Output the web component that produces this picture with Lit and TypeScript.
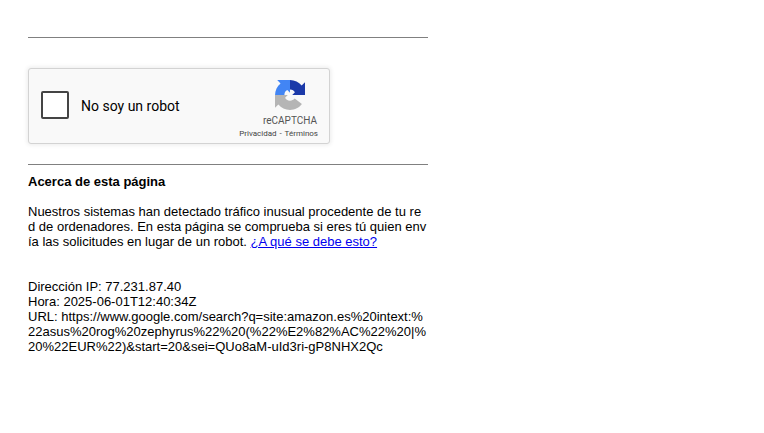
import { LitElement, html, css } from "lit";
import { customElement } from "lit/decorators.js";

@customElement("captcha-box")
class CaptchaBox extends LitElement {
  static styles = css`
    :host {
      display: flex;
      box-sizing: border-box;
      width: 302px;
      height: 76px;
      border: 1px solid #d3d3d3;
      border-radius: 3px;
      background: #f9f9f9;
      box-shadow: 0 0 4px 1px rgba(0, 0, 0, 0.08);
      color: #000;
      font-family: Roboto, "Liberation Sans", sans-serif;
    }
    .check {
      display: flex;
      align-items: center;
      flex: 1;
      gap: 12px;
      padding-left: 12px;
      font-size: 14px;
      line-height: 17px;
    }
    .box {
      box-sizing: border-box;
      width: 28px;
      height: 28px;
      margin-bottom: 2px;
      border: 2px solid #444;
      border-radius: 2px;
      background: #fff;
    }
    .brand {
      display: flex;
      flex-direction: column;
      align-items: flex-end;
      width: 90px;
      padding: 11px 11px 0 0;
      color: #555;
      white-space: nowrap;
    }
    .logo {
      width: 30px;
      height: 30px;
      margin-right: 13px;
    }
    .name {
      margin: 6px 1px 0 0;
      font-size: 10px;
      line-height: 10px;
    }
    .terms {
      margin-top: 3px;
      color: #444;
      font-size: 8px;
      line-height: 10px;
      word-spacing: 1px;
    }
  `;

  render() {
    return html`
      <div class="check"><span class="box"></span><span>No soy un robot</span></div>
      <div class="brand">
        <svg class="logo" viewBox="0 0 64 64">
          <path fill="#1c3aa9" d="M32 .1C42 .1 51 4.7 56.8 11.8L64 4.7V32H36.7L42.5 26.2C40.5 22.6 37.5 20 32 20Z" />
          <path fill="#4285f4" d="M.1 32C.1 22 4.7 13 11.8 7.2L4.7 0H32V27.3L26.2 21.5C22.6 23.5 20 26.5 20 32Z" />
          <path fill="#b5b5b5" d="M0 32H27.3L21.5 37.8C23.5 41.4 26.5 44 32 44C36 44 39 42.5 42 39.5L57.4 51.3C51.6 59.2 42.4 63.9 32 63.9C22 63.9 13 59.3 7.2 52.2L0 59.3Z" />
        </svg>
        <span class="name">reCAPTCHA</span>
        <span class="terms">Privacidad - Términos</span>
      </div>
    `;
  }
}

@customElement("app-root")
class AppRoot extends LitElement {
  static styles = css`
    :host {
      display: block;
      box-sizing: border-box;
      min-height: 100vh;
      padding: 37px 28px 0;
      background: #fff;
      color: #000;
      font: 13px/15px "Liberation Sans", Arial, sans-serif;
    }
    .page {
      width: 400px;
      word-break: break-all;
    }
    .rule {
      height: 1px;
      background: #808080;
    }
    captcha-box {
      margin: 30px 0 20px;
    }
    .title {
      margin-top: 9px;
      font-weight: bold;
    }
    .about {
      margin-top: 15px;
    }
    .details {
      margin-top: 30px;
    }
    a {
      color: #0000ee;
    }
  `;

  render() {
    return html`
      <div class="page">
        <div class="rule"></div>
        <captcha-box></captcha-box>
        <div class="rule"></div>
        <div class="title">Acerca de esta página</div>
        <div class="about">
          Nuestros sistemas han detectado tráfico inusual procedente de tu red de ordenadores. En esta página se comprueba si eres tú quien envía las solicitudes en lugar de un robot.
          <a href="#">¿A qué se debe esto?</a>
        </div>
        <div class="details">
          <div>Dirección IP: 77.231.87.40</div>
          <div>Hora: 2025-06-01T12:40:34Z</div>
          <div>URL: https://www.google.com/search?q=site:amazon.es%20intext:%22asus%20rog%20zephyrus%22%20(%22%E2%82%AC%22%20|%20%22EUR%22)&amp;start=20&amp;sei=QUo8aM-uId3ri-gP8NHX2Qc</div>
        </div>
      </div>
    `;
  }
}
